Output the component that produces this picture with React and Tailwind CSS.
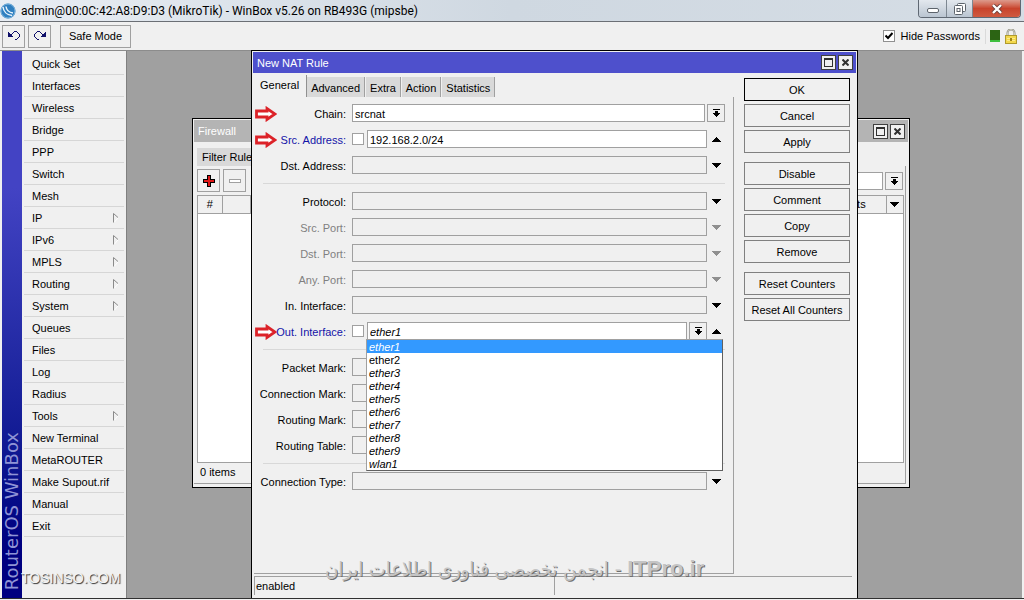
import React, { useState } from 'react';

const MENU = [
  { label: 'Quick Set' },
  { label: 'Interfaces' },
  { label: 'Wireless' },
  { label: 'Bridge' },
  { label: 'PPP' },
  { label: 'Switch' },
  { label: 'Mesh' },
  { label: 'IP', sub: true },
  { label: 'IPv6', sub: true },
  { label: 'MPLS', sub: true },
  { label: 'Routing', sub: true },
  { label: 'System', sub: true },
  { label: 'Queues' },
  { label: 'Files' },
  { label: 'Log' },
  { label: 'Radius' },
  { label: 'Tools', sub: true },
  { label: 'New Terminal' },
  { label: 'MetaROUTER' },
  { label: 'Make Supout.rif' },
  { label: 'Manual' },
  { label: 'Exit' },
];

const INTERFACES = ['ether1', 'ether2', 'ether3', 'ether4', 'ether5', 'ether6', 'ether7', 'ether8', 'ether9', 'wlan1'];

const TABS = ['General', 'Advanced', 'Extra', 'Action', 'Statistics'];

const ACTIONS = [
  ['OK', 'Cancel', 'Apply'],
  ['Disable', 'Comment', 'Copy', 'Remove'],
  ['Reset Counters', 'Reset All Counters'],
];

const LogoIcon = () => (
  <svg width="16" height="16" viewBox="0 0 16 16">
    <circle cx="8" cy="8" r="7.5" fill="#2f7fc0" />
    <circle cx="8" cy="8" r="7" fill="none" stroke="#7fb6dd" />
    <path d="M3 4c.5 4.500 4 8 9 8.500M6 3.500c.5 3.500 3 6 7 6.500" fill="none" stroke="#e8f4fc" strokeWidth="1.500" />
  </svg>
);

const UndoIcon = () => (
  <svg width="12" height="10" viewBox="0 0 12 10" shapeRendering="crispEdges">
    <path d="M0 1h1v1h1v1h1v1h1v1h1v1H0z" fill="#10106a" />
    <path d="M3 3h1V2h1V1h1V0h3v1h1v1h1v1h1v3h-1v1h-1v1H9v1H7V8h2V7h1V6h1V3h-1V2H9V1H6v1H5v1H4v1H3z" fill="#10106a" />
  </svg>
);

const RedoIcon = () => (
  <svg width="12" height="10" viewBox="0 0 12 10" shapeRendering="crispEdges">
    <g transform="translate(12 0) scale(-1 1)">
      <path d="M0 1h1v1h1v1h1v1h1v1h1v1H0z" fill="#10106a" />
      <path d="M3 3h1V2h1V1h1V0h3v1h1v1h1v1h1v3h-1v1h-1v1H9v1H7V8h2V7h1V6h1V3h-1V2H9V1H6v1H5v1H4v1H3z" fill="#10106a" />
    </g>
  </svg>
);

const SubmenuIcon = () => (
  <svg width="6" height="10" viewBox="0 0 6 10">
    <path d="M.5 9.500V.5l4.500 4" fill="none" stroke="#8a8a8a" />
    <path d="M5 5L1.500 9" fill="none" stroke="#fff" />
  </svg>
);

const Triangle = ({ up, muted }) => (
  <svg width="9" height="5" viewBox="0 0 9 5" shapeRendering="crispEdges" className={muted ? 'fill-[#909090]' : 'fill-black'}>
    {up ? (
      <path d="M4 0h1v1h1v1h1v1h1v1h1v1H0V4h1V3h1V2h1V1h1z" />
    ) : (
      <path d="M0 0h9v1H8v1H7v1H6v1H5v1H4V4H3V3H2V2H1V1H0z" />
    )}
  </svg>
);

const DropIcon = () => (
  <svg width="7" height="8" viewBox="0 0 7 8" shapeRendering="crispEdges">
    <path d="M0 0h7v1H0zM2 2h3v2h2v1H6v1H5v1H4v1H3V7H2V6H1V5H0V4h2z" fill="#000" />
  </svg>
);

const RedArrow = () => (
  <svg width="22" height="16" viewBox="0 0 22 16" className="absolute left-px top-0.5">
    <path d="M1.500 5H12V2.500l8 5.500-8 5.500V11H1.500z" fill="#fff" stroke="#dc2228" strokeWidth="2.800" />
  </svg>
);

const LockIcon = () => (
  <svg width="12" height="15" viewBox="0 0 12 15">
    <path d="M2.500 7V4a3.500 3.500 0 0 1 7 0v3" fill="none" stroke="#8d8d80" strokeWidth="2" />
    <path d="M2.500 7V4a3.500 3.500 0 0 1 7 0v3" fill="none" stroke="#dcdccf" strokeWidth=".8" />
    <rect x=".5" y="6.500" width="11" height="8" fill="#f3d84c" stroke="#b09a2c" />
    <path d="M2 9.500h8M2 11.500h8" stroke="#fbeb8e" />
    <rect x="5" y="9" width="2" height="3" fill="#a08418" />
  </svg>
);

const WindowButtons = () => (
  <div className="flex gap-0.5">
    <button aria-label="Maximize" className="flex h-[15px] w-[15px] items-center justify-center border border-[#404040] bg-[#f0f0f0]">
      <svg width="9" height="9" viewBox="0 0 9 9" shapeRendering="crispEdges">
        <path d="M0 0h9v9H0zM1 2v6h7V2z" fillRule="evenodd" fill="#303030" />
      </svg>
    </button>
    <button aria-label="Close" className="flex h-[15px] w-[15px] items-center justify-center border border-[#404040] bg-[#f0f0f0]">
      <svg width="7" height="7" viewBox="0 0 7 7">
        <path d="M.5 .5l6 6M6.500 .5l-6 6" stroke="#303030" strokeWidth="2" />
      </svg>
    </button>
  </div>
);

const TitleBar = () => (
  <header className="flex h-[22px] shrink-0 items-center justify-between border-b border-[#6b6f75] bg-linear-to-r from-[#e8edf3] via-[#cfd8e1] to-[#d5dde5] font-[Roboto,'Open_Sans',sans-serif] text-xs">
    <div className="flex items-center gap-[5px]">
      <LogoIcon />
      <h1>admin@00:0C:42:A8:D9:D3 (MikroTik) - WinBox v5.26 on RB493G (mipsbe)</h1>
    </div>
    <div className="mr-[3px] flex h-[18px] self-start overflow-hidden rounded-b border border-t-0 border-[#5f6873]">
      <button aria-label="Minimize" className="flex w-7 items-end justify-center border-r border-[#7d8791] bg-linear-to-b from-[#e3e8ee] to-[#bac5d1] pb-1">
        <span className="h-[5px] w-3 rounded-xs border border-[#5c636b] bg-white" />
      </button>
      <button aria-label="Restore" className="flex w-[26px] items-center justify-center border-r border-[#7d8791] bg-linear-to-b from-[#e3e8ee] to-[#bac5d1]">
        <svg width="12" height="12" viewBox="0 0 12 12" className="fill-white stroke-[#5c636b]">
          <rect x="3.500" y=".5" width="8" height="8" rx="1" />
          <rect x=".5" y="2.500" width="8" height="9" rx="1" />
          <rect x="3" y="5.500" width="3" height="3" />
        </svg>
      </button>
      <button aria-label="Close" className="flex w-[47px] items-center justify-center bg-linear-to-b from-[#dc9a8c] via-[#c8432c] to-[#cf5a40]">
        <svg width="12" height="10" viewBox="0 0 12 10">
          <path d="M2 1l8 8M10 1L2 9" stroke="#6d3d38" strokeWidth="4" />
          <path d="M2 1l8 8M10 1L2 9" stroke="#fff" strokeWidth="2.400" />
        </svg>
      </button>
    </div>
  </header>
);

const Toolbar = () => {
  const [hidden, setHidden] = useState(true);
  return (
    <div className="flex h-[29px] shrink-0 items-center justify-between border-b border-[#8c8c8c] px-0.5">
      <div className="flex">
        <button aria-label="Undo" className="flex h-[23px] w-[23px] items-center justify-center border border-[#a0a0a0]">
          <UndoIcon />
        </button>
        <button aria-label="Redo" className="ml-[3px] flex h-[23px] w-[23px] items-center justify-center border border-[#a0a0a0]">
          <RedoIcon />
        </button>
        <button className="ml-[9px] h-[23px] w-[71px] border border-[#a0a0a0]">Safe Mode</button>
      </div>
      <div className="flex items-center pr-[5px]">
        <label className="flex items-center gap-1.5">
          <span className="relative flex">
            <input
              type="checkbox"
              checked={hidden}
              onChange={(e) => setHidden(e.target.checked)}
              className="peer h-3 w-3 appearance-none border border-[#909090] bg-white"
            />
            <svg width="8" height="8" viewBox="0 0 8 8" className="pointer-events-none absolute left-0.5 top-0.5 hidden peer-checked:block">
              <path d="M.5 3.500L3 6l4.500-5" fill="none" stroke="#000" strokeWidth="2" />
            </svg>
          </span>
          Hide Passwords
        </label>
        <div className="ml-[5px] flex items-center gap-[5px] border-l border-[#dadada] pl-1">
          <span className="h-3 w-[10px] border-b-2 border-[#3fbf3f] bg-[#2c6414]" />
          <LockIcon />
        </div>
      </div>
    </div>
  );
};

const Sidebar = () => (
  <aside className="relative flex shrink-0 border-r border-[#808080] pl-0.5">
    <div className="flex w-5 items-end justify-center bg-linear-to-b from-[#4343c4] from-25% to-[#000080] to-90% pb-2">
      <span className="rotate-180 whitespace-nowrap font-['DejaVu_Sans',sans-serif] text-lg leading-5 text-[#8f94d6] [writing-mode:vertical-rl]">
        RouterOS WinBox
      </span>
    </div>
    <nav className="w-[104px] px-0.5 pt-0.5">
      {MENU.map((item) => (
        <button key={item.label} className="flex h-[22px] w-full items-center justify-between border-b border-[#d6d6d6] pl-2 pr-[5px] text-left">
          {item.label}
          {item.sub && <SubmenuIcon />}
        </button>
      ))}
    </nav>
    <span className="absolute bottom-2.5 left-[21px] font-['Liberation_Sans',sans-serif] text-sm leading-5 text-[#f4f4f4] [text-shadow:1px_1px_1px_#303030]">
      TOSINSO.COM
    </span>
  </aside>
);

const FirewallWindow = () => (
  <section className="absolute left-[65px] top-[67px] flex h-[370px] w-[718px] flex-col border border-black bg-[#f0f0f0] p-px">
    <div className="flex h-[22px] items-center justify-between bg-[#b4b4b4] pl-1 pr-[3px] text-white">
      <h2>Firewall</h2>
      <WindowButtons />
    </div>
    <div className="flex pl-[3px] pt-1.5">
      <button className="h-[18px] bg-[#d9d9d9] px-[5px]">Filter Rules</button>
    </div>
    <div className="mr-0.5 flex flex-1 flex-col border-b border-r border-[#a0a0a0] pl-[3px] pr-px">
      <div className="flex items-center justify-between py-[3px]">
        <div className="flex gap-[3px]">
          <button aria-label="Add" className="flex h-[23px] w-[23px] items-center justify-center border border-[#a0a0a0]">
            <svg width="12" height="12" viewBox="0 0 12 12" shapeRendering="crispEdges">
              <path d="M4 0h4v4h4v4H8v4H4V8H0V4h4z" fill="#000" />
              <path d="M5 1h2v4h4v2H7v4H5V7H1V5h4z" fill="#e01818" />
            </svg>
          </button>
          <button aria-label="Remove" className="flex h-[23px] w-[23px] items-center justify-center border border-[#a0a0a0]">
            <span className="h-1 w-3 border border-[#a0a0a0] bg-white" />
          </button>
        </div>
        <div className="mr-px flex gap-0.5">
          <input aria-label="Filter" className="h-[18px] w-[110px] border border-[#a0a0a0] bg-white px-1" />
          <button aria-label="Filter list" className="flex h-[18px] w-[18px] items-center justify-center border border-[#a0a0a0]">
            <DropIcon />
          </button>
        </div>
      </div>
      <div className="flex-1 border border-[#a0a0a0] bg-white">
        <table className="w-full table-fixed border-collapse bg-[#f0f0f0]">
          <thead>
            <tr className="h-[17px] border-b border-[#a0a0a0] text-left leading-4">
              <th className="w-6 border-r border-[#a0a0a0] text-center font-normal">#</th>
              <th className="w-7 border-r border-[#a0a0a0]" />
              <th className="border-r border-[#a0a0a0]" />
              <th className="w-[62px] border-r border-[#a0a0a0] pl-0.5 font-normal">Packets</th>
              <th className="w-[17px]">
                <button aria-label="Columns" className="flex w-full justify-center">
                  <Triangle />
                </button>
              </th>
            </tr>
          </thead>
        </table>
      </div>
      <p className="h-5 pl-[3px] leading-[18px]">0 items</p>
    </div>
    <div className="h-0.5" />
  </section>
);

const Field = ({ id, label, value = '', tone = 'text-black', expand = 'down', check, drop, italic, marked, muted, children }) => {
  const [text, setText] = useState(value);
  const filled = value !== '';
  return (
    <div className="relative flex h-[18px] items-center">
      {marked && <RedArrow />}
      <label htmlFor={id} className={`relative w-[92px] shrink-0 pt-0.5 text-right ${tone}`}>
        {label}:
      </label>
      <div className="ml-1.5 flex flex-1 items-center">
        {check && <input type="checkbox" aria-label={`Not ${label}`} className="mr-[3px] h-3 w-3 appearance-none border border-[#a0a0a0] bg-white" />}
        <input
          id={id}
          value={text}
          disabled={muted}
          onChange={(e) => setText(e.target.value)}
          className={`h-[18px] min-w-0 flex-1 border border-[#a0a0a0] px-0.5 pt-0.5 outline-none ${filled ? 'bg-white' : 'bg-[#f0f0f0]'} ${italic ? 'italic' : ''}`}
        />
        {drop && (
          <button aria-label={`${label} list`} className="ml-0.5 flex h-[18px] w-[18px] items-center justify-center border border-[#a0a0a0]">
            <DropIcon />
          </button>
        )}
        {expand && (
          <button aria-label={`Toggle ${label}`} disabled={muted} className="flex h-[18px] w-[18px] items-center justify-center">
            <Triangle up={expand === 'up'} muted={muted} />
          </button>
        )}
      </div>
      {children}
    </div>
  );
};

const InterfaceList = () => {
  const [active, setActive] = useState('ether1');
  return (
    <ul
      role="listbox"
      aria-label="Out. Interface"
      className="absolute left-28 right-0.5 top-[17px] z-10 border border-[#a0a0a0] border-b-[#606060] border-r-[#606060] bg-white"
    >
      {INTERFACES.map((name) => (
        <li
          key={name}
          role="option"
          aria-selected={name === active}
          onClick={() => setActive(name)}
          className={`h-[13px] pl-0.5 leading-[15px] ${name === 'ether2' ? '' : 'italic'} ${name === active ? 'bg-[#3399ff] text-white' : ''}`}
        >
          {name}
        </li>
      ))}
    </ul>
  );
};

const Separator = () => <hr className="mt-px ml-[9px] border-[#d8d8d8]" />;

const NatRuleWindow = () => {
  const [tab, setTab] = useState('General');
  return (
    <section className="absolute -top-px bottom-0 left-[124px] flex w-[607px] flex-col border border-b-0 border-black bg-[#f0f0f0] p-px pb-0">
      <div className="flex h-[21px] shrink-0 items-center justify-between bg-[#4e50cc] pl-1 pr-[3px] text-white">
        <h2>New NAT Rule</h2>
        <WindowButtons />
      </div>
      <div className="flex min-h-0 flex-1">
        <div className="flex flex-1 flex-col">
          <div role="tablist" className="flex h-[24px] items-end">
            {TABS.map((name) => (
              <button
                key={name}
                role="tab"
                aria-selected={name === tab}
                onClick={() => setTab(name)}
                className={
                  name === tab
                    ? 'h-[22px] border-r border-[#909090] px-[7px] pb-0.5'
                    : 'mr-px h-5 border-r border-[#a0a0a0] bg-[#d9d9d9] px-1 pt-px'
                }
              >
                {name}
              </button>
            ))}
          </div>
          <div className="ml-px flex flex-1 flex-col gap-2 border-b border-r border-[#a0a0a0] pr-2 pt-[7px]">
            <Field id="chain" label="Chain" value="srcnat" drop expand={null} marked />
            <Field id="src-address" label="Src. Address" value="192.168.2.0/24" tone="text-[#1414a8]" check expand="up" marked />
            <Field id="dst-address" label="Dst. Address" />
            <Separator />
            <Field id="protocol" label="Protocol" />
            <Field id="src-port" label="Src. Port" tone="text-[#808080]" muted />
            <Field id="dst-port" label="Dst. Port" tone="text-[#808080]" muted />
            <Field id="any-port" label="Any. Port" tone="text-[#808080]" muted />
            <Field id="in-interface" label="In. Interface" />
            <Field id="out-interface" label="Out. Interface" value="ether1" tone="text-[#1414a8]" check drop expand="up" italic marked>
              <InterfaceList />
            </Field>
            <Separator />
            <Field id="packet-mark" label="Packet Mark" />
            <Field id="connection-mark" label="Connection Mark" />
            <Field id="routing-mark" label="Routing Mark" />
            <Field id="routing-table" label="Routing Table" />
            <Separator />
            <Field id="connection-type" label="Connection Type" />
          </div>
        </div>
        <div className="flex w-[122px] shrink-0 flex-col gap-[9px] pl-2.5 pr-1.5 pt-[5px]">
          {ACTIONS.map((group) => (
            <div key={group[0]} className="flex flex-col gap-[3px]">
              {group.map((name) => (
                <button key={name} className={`h-[23px] border ${name === 'OK' ? 'border-black' : 'border-[#808080]'}`}>
                  {name}
                </button>
              ))}
            </div>
          ))}
        </div>
      </div>
      <footer className="ml-px mr-1 mt-0.5 flex h-[22px] shrink-0 pb-[3px]">
        <p className="flex-1 border-l border-t border-[#a0a0a0] pl-px leading-[18px]">enabled</p>
        <p className="flex-1 border-l border-t border-[#a0a0a0]" />
      </footer>
      <p
        dir="rtl"
        className="pointer-events-none absolute bottom-[15px] left-[73px] flex items-center gap-1.5 whitespace-nowrap font-['DejaVu_Sans_Condensed','DejaVu_Sans',sans-serif] text-xl leading-7 text-[#c4c4c4] [text-shadow:1px_1px_0_#707070]"
      >
        <span className="font-['Liberation_Sans',sans-serif] text-[22px] font-bold">ITPro.ir</span>
        <span>-</span>
        <span>انجمن تخصصی فناوری اطلاعات ایران</span>
      </p>
    </section>
  );
};

const App = () => (
  <div className="flex h-screen flex-col overflow-hidden whitespace-nowrap bg-[#f0f0f0] font-['Liberation_Sans',Arial,sans-serif] text-[11px] leading-4 text-black">
    <TitleBar />
    <Toolbar />
    <div className="flex min-h-0 flex-1">
      <Sidebar />
      <main className="relative mr-0.5 flex-1 bg-[#a0a0a0]">
        <FirewallWindow />
        <NatRuleWindow />
      </main>
    </div>
    <div className="h-0.5 shrink-0 border-t border-[#303030]" />
  </div>
);

export default App;
